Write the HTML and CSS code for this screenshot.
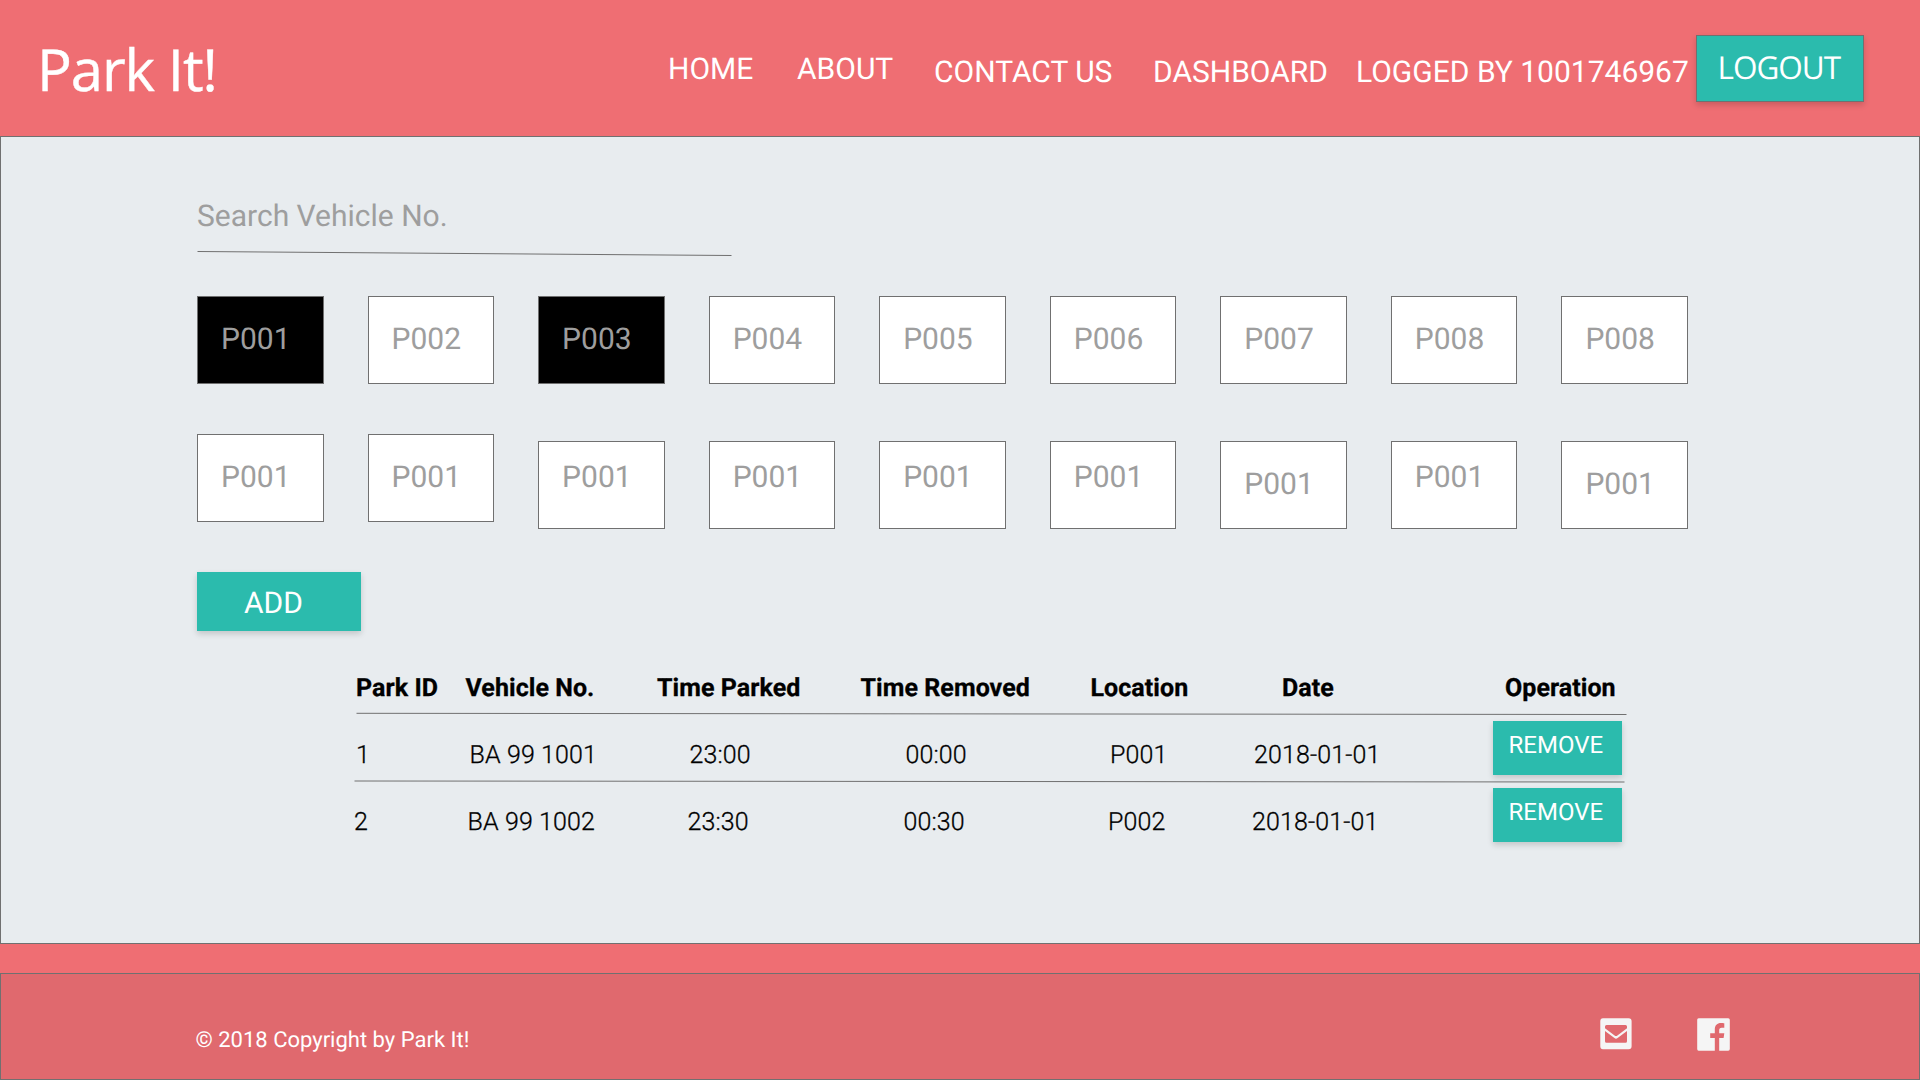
FILE: index.html
```html
<!DOCTYPE html>
<html lang="en">
<head>
  <meta charset="utf-8">
  <title>Park It!</title>
  <link rel="stylesheet" href="styles.css">
</head>
<body>
  <header class="header">
    <div class="logo">Park It!</div>
    <a class="nav-link">HOME</a>
    <a class="nav-link">ABOUT</a>
    <a class="nav-link nav-link--low">CONTACT US</a>
    <a class="nav-link nav-link--low">DASHBOARD</a>
    <span class="nav-link nav-link--low">LOGGED BY 1001746967</span>
    <a class="logout">LOGOUT</a>
  </header>

  <main class="main">
    <div class="search">Search Vehicle No.</div>
    <svg class="search-line" width="536" height="6" viewBox="0 0 536 6"><path d="M0.5 1.5L534.5 5.5"/></svg>

    <div class="slots">
      <div class="slot slot--taken">P001</div>
      <div class="slot">P002</div>
      <div class="slot slot--taken">P003</div>
      <div class="slot">P004</div>
      <div class="slot">P005</div>
      <div class="slot">P006</div>
      <div class="slot">P007</div>
      <div class="slot">P008</div>
      <div class="slot">P008</div>
      <div class="slot">P001</div>
      <div class="slot">P001</div>
      <div class="slot slot--low slot--raised">P001</div>
      <div class="slot slot--low slot--raised">P001</div>
      <div class="slot slot--low slot--raised">P001</div>
      <div class="slot slot--low slot--raised">P001</div>
      <div class="slot slot--low">P001</div>
      <div class="slot slot--low slot--raised">P001</div>
      <div class="slot slot--low">P001</div>
    </div>

    <a class="add">ADD</a>

    <section class="table">
      <div class="thead">
        <span>Park ID</span><span>Vehicle No.</span><span>Time Parked</span><span>Time Removed</span><span>Location</span><span>Date</span><span>Operation</span>
      </div>
      <svg class="rule" width="1274" height="4" viewBox="0 0 1274 4"><path d="M2.5 1.3L1272.5 2.5"/></svg>
      <div class="row">
        <span>1</span><span>BA 99 1001</span><span>23:00</span><span>00:00</span><span>P001</span><span>2018-01-01</span><a class="remove">REMOVE</a>
      </div>
      <svg class="rule" width="1274" height="4" viewBox="0 0 1274 4"><path d="M0.5 2L1270.5 3"/></svg>
      <div class="row row--second">
        <span>2</span><span>BA 99 1002</span><span>23:30</span><span>00:30</span><span>P002</span><span>2018-01-01</span><a class="remove">REMOVE</a>
      </div>
    </section>
  </main>

  <footer class="footer">
    <p class="copyright">© 2018 Copyright by Park It!</p>
    <div class="social">
      <svg width="32" height="32" viewBox="0 0 32 32">
        <path fill-rule="evenodd" d="M3 0.3H28.6Q31.6 0.3 31.6 3.3V28.3Q31.6 31.3 28.6 31.3H3Q0.3 31.3 0.3 28.3V3.3Q0.3 0.3 3 0.3ZM6.5 7Q5 7 5 8.5V10.2L14.6 17.4Q16 18.5 17.4 17.4L27 10.2V8.5Q27 7 25.5 7ZM5 13V23.2Q5 24.7 6.5 24.7H25.5Q27 24.7 27 23.2V13L17.6 20.1Q16 21.3 14.4 20.1Z"/>
      </svg>
      <svg width="33" height="33" viewBox="0 0 33 33">
        <path fill-rule="evenodd" d="M1.6 0.2H31.2Q32.8 0.2 32.8 1.8V31Q32.8 32.7 31.2 32.7H22.2V20H26.6L27.3 15.3H22.2V12.3C22.2 10.8 22.8 9.8 24.7 9.8H27.3V5.3C26.6 5.2 25.2 5 23.9 5C20.2 5 17.8 7.2 17.8 11.5V15.3H13.2V20H17.8V32.7H1.6Q0.2 32.7 0.2 31V1.8Q0.2 0.2 1.6 0.2Z"/>
      </svg>
    </div>
  </footer>
</body>
</html>
```
FILE: styles.css
```css
* {
  box-sizing: border-box;
}

body {
  margin: 0;
  width: 1920px;
  height: 1080px;
  overflow: hidden;
  background: #ef6e73;
  font-family: Roboto, "Liberation Sans", sans-serif;
  text-rendering: geometricPrecision;
  white-space: nowrap;
}

.header {
  display: grid;
  grid-template-columns: 631px 129px 137px 219px 203px 340px 168px;
  align-items: start;
  height: 136px;
  padding-left: 37px;
  color: #fff;
}

.logo {
  margin-top: 29px;
  font: 400 58px/79px "Open Sans", "Noto Sans", sans-serif;
  letter-spacing: -1.1px;
  -webkit-text-stroke: 0.4px #fff;
}

.nav-link {
  margin-top: 52px;
  font-size: 30px;
  line-height: 36px;
}

.nav-link--low {
  margin-top: 55px;
}

.logout {
  height: 67px;
  margin-top: 35px;
  padding: 10px 0 0 20.5px;
  border: 1px solid #707070;
  background: #2bbbad;
  box-shadow: 0 3px 6px rgba(0, 0, 0, 0.16);
  font: 400 31.5px/43px "Open Sans", "Noto Sans", sans-serif;
  letter-spacing: -1px;
}

.main {
  height: 808px;
  padding: 62px 0 0 196px;
  border: 1px solid #707070;
  background: #e8ecef;
}

.search {
  color: #9e9e9e;
  font-size: 30px;
  line-height: 36px;
}

.search-line {
  display: block;
  margin-top: 15px;
}

.search-line path,
.rule path {
  fill: none;
  stroke: #707070;
}

.slots {
  display: grid;
  grid-template-columns: repeat(9, 126.5px);
  grid-template-rows: 138px 138px;
  column-gap: 44.06px;
  margin-top: 40px;
}

.slot {
  height: 88.3px;
  padding: 25px 0 0 23px;
  border: 1px solid #707070;
  background: #fff;
  color: #9e9e9e;
  font-size: 30px;
  line-height: 36px;
}

.slot--taken {
  background: #000;
}

.slot--low {
  margin-top: 7px;
}

.slot--raised {
  padding-top: 18px;
}

.add {
  display: block;
  width: 163.5px;
  height: 59px;
  padding: 14px 0 0 47px;
  background: #2bbbad;
  box-shadow: 0 3px 6px rgba(0, 0, 0, 0.16);
  color: #fff;
  font-size: 30px;
  line-height: 36px;
}

.table {
  width: 1274px;
  margin: 43px 0 0 157px;
  font-size: 25px;
  line-height: 29px;
  color: #000;
}

.thead {
  display: grid;
  grid-template-columns: 109.5px 191.5px 203.5px 230px 191.5px 223px 1fr;
  height: 38px;
  padding-left: 2px;
  font-weight: 700;
  letter-spacing: 0.06px;
  -webkit-text-stroke: 0.3px #000;
}

.rule {
  display: block;
}

.row {
  display: grid;
  grid-template-columns: 113.5px 220px 216px 204.5px 144px 239px 129px;
  height: 63px;
  padding: 25px 0 0 2px;
  font-weight: 300;
  letter-spacing: 0.12px;
  -webkit-text-stroke: 0.3px #000;
}

.row--second {
  grid-template-columns: 113.5px 220px 216px 204.5px 144px 241px 129px;
  margin-left: -2px;
}

.remove {
  height: 54px;
  margin-top: -20px;
  padding: 10px 0 0 15.5px;
  background: #2bbbad;
  box-shadow: 0 3px 6px rgba(0, 0, 0, 0.16);
  color: #fff;
  font-size: 24px;
  font-weight: 400;
  line-height: 28px;
  letter-spacing: 0;
  -webkit-text-stroke: 0;
}

.footer {
  display: flex;
  justify-content: space-between;
  height: 107px;
  margin-top: 29px;
  padding: 44px 189px 0 194.5px;
  border: 1px solid #707070;
  background: #e0696e;
}

.copyright {
  margin: 10px 0 0;
  color: #fff;
  font-size: 22px;
  line-height: 25px;
}

.social {
  display: flex;
  gap: 65px;
  align-items: flex-start;
  fill: #f5f5f5;
}
```
